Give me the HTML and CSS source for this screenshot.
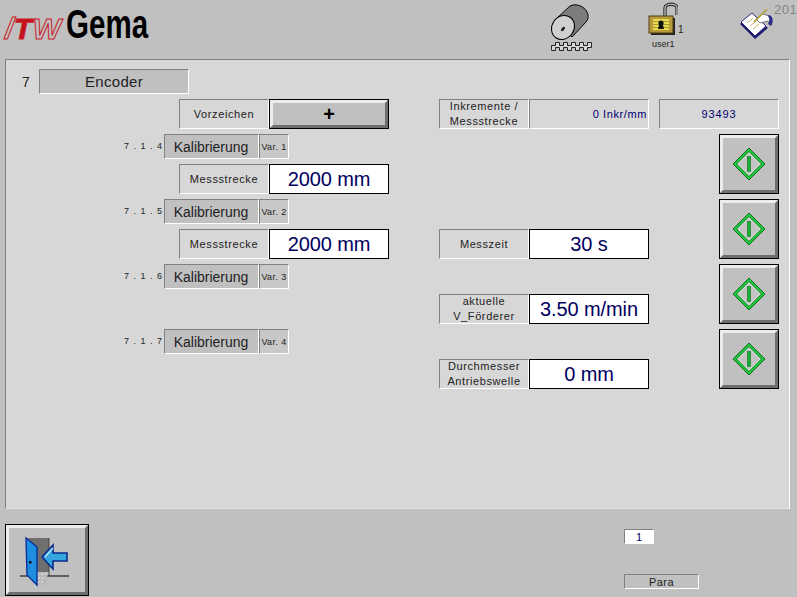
FILE: index.html
```html
<!DOCTYPE html>
<html lang="de">
<head>
<meta charset="utf-8">
<title>Encoder</title>
<link rel="stylesheet" href="styles.css">
</head>
<body>
<svg class="defs" width="0" height="0" aria-hidden="true">
  <symbol id="diamond" viewBox="0 0 34 34">
    <path d="M17 1 33 17 17 33 1 17Z" fill="#20c83c" stroke="#0c6e1e" stroke-width="1"/>
    <path d="M17 4.500 29.500 17 17 29.500 4.500 17Z" fill="#d6ded6" stroke="#0c7a22" stroke-width="1"/>
    <path d="M17 6.500 27.500 17 17 27.500 6.500 17Z" fill="#c4c4c4"/>
    <rect x="15.500" y="9.500" width="3" height="15" fill="#18b034" stroke="#0c6e1e" stroke-width=".6"/>
  </symbol>
</svg>
<header class="top">
  <div class="logo"><span class="itw">/<b>T</b>W</span><span class="gema">Gema</span></div>
  <svg class="ico-encoder" width="42" height="48" viewBox="0 0 42 48">
    <path d="M5 17 20 3C26 0 34 3 37 9 39 13 38 17 36 19L22 34Z" fill="#7d7d7d" stroke="#000"/>
    <ellipse cx="13" cy="24.500" rx="11" ry="12.500" transform="rotate(35 13 24.500)" fill="#d0d0d0" stroke="#000"/>
    <ellipse cx="13" cy="26" rx="2.600" ry="1.400" transform="rotate(-50 13 26)" fill="#222"/>
    <path d="M1.500 46.500V42.500H5.500V39.500H9.500V42.500H13.500V39.500H17.500V42.500H21.500V39.500H25.500V42.500H29.500V39.500H33.500V42.500H37.500V39.500H41.500V44.500H37.500V47.500H33.500V44.500H29.500V47.500H25.500V44.500H21.500V47.500H17.500V44.500H13.500V47.500H9.500V44.500H5.500V47.500H1.500Z" fill="#d8d8d8" stroke="#222"/>
  </svg>
  <div class="user">
    <div class="lockrow">
      <svg width="30" height="33" viewBox="0 0 30 33">
        <path d="M17 14V6C17 1 29 1 29 6V13" fill="none" stroke="#333" stroke-width="3.400"/>
        <path d="M17 14V6C17 1 29 1 29 6V13" fill="none" stroke="#c8c8c8" stroke-width="1.200"/>
        <rect x="3" y="16" width="24" height="17" fill="#222"/>
        <rect x="1" y="14" width="24" height="17" fill="#b89a3c" stroke="#4c3d10"/>
        <rect x="5" y="17" width="16" height="11" fill="#e8dc50"/>
        <path d="M5 19.500H21M5 22.500H21M5 25.500H21" stroke="#a89a30"/>
        <circle cx="13" cy="21" r="2.600" fill="#111"/>
        <path d="M11.500 21H14.500L16 27H10Z" fill="#111"/>
      </svg>
      <span class="lockno">1</span>
    </div>
    <span class="username">user1</span>
  </div>
  <svg class="ico-note" width="36" height="32" viewBox="0 0 36 32">
    <path d="M1 15 14 5 29 19 16 30Z" fill="#1d1d6e"/>
    <path d="M2 13 13 4 27 17 16 27Z" fill="#fff" stroke="#26267e"/>
    <path d="M8 14 14 9M11 17 17 12M14 20 20 15" stroke="#c9b765"/>
    <path d="M17 10 21 14 29 12 32 16 30 7 24 5Z" fill="#fff" stroke="#444" stroke-width=".7"/>
    <path d="M30 6C34 7 35 13 32 17L29 15C31 12 31 9 29 7Z" fill="#2a2a8a"/>
    <path d="M15 13 28 0" stroke="#b7a24a" stroke-width="1.800"/>
  </svg>
  <span class="counter">201</span>
</header>

<main class="panel">
  <div class="title-row">
    <span class="title-no">7</span>
    <div class="title">Encoder</div>
  </div>
  <div class="form">
    <div class="label r1 c-left">Vorzeichen</div>
    <div class="toggle r1 c-leftval"><span class="bevel">+</span></div>
    <div class="label two r1 c-mid">Inkremente /<br>Messstrecke</div>
    <div class="readout end r1 c-midval">0 Inkr/mm</div>
    <div class="readout r1 c-far">93493</div>

    <span class="num r2">7 . 1 . 4</span>
    <div class="kal r2">Kalibrierung</div>
    <div class="var r2">Var. 1</div>
    <div class="label r3 c-left">Messstrecke</div>
    <div class="value r3 c-leftval">2000 mm</div>
    <button class="go r2-3" type="button"><span class="bevel"><svg width="34" height="34"><use href="#diamond"/></svg></span></button>

    <span class="num r4">7 . 1 . 5</span>
    <div class="kal r4">Kalibrierung</div>
    <div class="var r4">Var. 2</div>
    <div class="label r5 c-left">Messstrecke</div>
    <div class="value r5 c-leftval">2000 mm</div>
    <div class="label r5 c-mid">Messzeit</div>
    <div class="value r5 c-midval">30 s</div>
    <button class="go r4-5" type="button"><span class="bevel"><svg width="34" height="34"><use href="#diamond"/></svg></span></button>

    <span class="num r6">7 . 1 . 6</span>
    <div class="kal r6">Kalibrierung</div>
    <div class="var r6">Var. 3</div>
    <div class="label two r7 c-mid">aktuelle<br>V_Förderer</div>
    <div class="value r7 c-midval">3.50 m/min</div>
    <button class="go r6-7" type="button"><span class="bevel"><svg width="34" height="34"><use href="#diamond"/></svg></span></button>

    <span class="num r8">7 . 1 . 7</span>
    <div class="kal r8">Kalibrierung</div>
    <div class="var r8">Var. 4</div>
    <div class="label two r9 c-mid">Durchmesser<br>Antriebswelle</div>
    <div class="value r9 c-midval">0 mm</div>
    <button class="go r8-9" type="button"><span class="bevel"><svg width="34" height="34"><use href="#diamond"/></svg></span></button>
  </div>
</main>

<footer class="bottom">
  <button class="exit" type="button"><span class="bevel">
    <svg width="60" height="60" viewBox="0 0 60 60">
      <rect x="11" y="3" width="22" height="34" fill="#6f6f6f"/>
      <path d="M33 3V41" stroke="#444"/>
      <path d="M4 41H53" stroke="#000" stroke-width="1.200"/>
      <path d="M21 37H32L30 50H21Z" fill="#b9b9b9"/>
      <path d="M21 39H32M22 43H30M21 47H29" stroke="#eee" stroke-dasharray="2 2"/>
      <path d="M10 3 21 12V50L11 40Z" fill="#1e8fe0" stroke="#0a2f9c" stroke-width="1.400"/>
      <rect x="13" y="26" width="2.500" height="2.500" fill="#111"/>
      <path d="M26 22 37 10V18H51V26H37V34Z" fill="#35a6dd" stroke="#0a2a90" stroke-width="1.600"/>
      <path d="M29 22 37 13" stroke="#bfe8fa" stroke-width="1.200"/>
    </svg>
  </span></button>
  <div class="status">
    <div class="page">1</div>
    <div class="mode">Para</div>
  </div>
</footer>
</body>
</html>
```

FILE: styles.css
```css
* { box-sizing: border-box; }

html, body {
  margin: 0;
  width: 797px;
  height: 597px;
  overflow: hidden;
}

body {
  background: #c0c0c0;
  font-family: "Liberation Sans", Arial, sans-serif;
  color: #222;
  position: relative;
}

.defs { position: absolute; }

/* Header */
.top {
  height: 59px;
  display: flex;
  align-items: flex-start;
  padding-left: 5px;
}

.logo {
  width: 142px;
  height: 59px;
  display: flex;
  align-items: flex-start;
  white-space: nowrap;
}

.itw {
  width: 60px;
  margin-top: 13px;
  font-size: 30px;
  line-height: 32px;
  font-style: italic;
  font-weight: bold;
  color: transparent;
  -webkit-text-stroke: 1px #c8202a;
  letter-spacing: .5px;
}

.itw b {
  color: #c4101c;
}

.gema {
  margin: 1px 0 0 0;
  font-size: 41px;
  line-height: 46px;
  font-weight: bold;
  color: #000;
  transform: translateX(4px) scaleX(.72);
  transform-origin: left top;
}

.ico-encoder { margin: 3px 0 0 403px; flex: none; }

.user {
  margin: 2px 0 0 56px;
  width: 34px;
  flex: none;
  display: flex;
  flex-direction: column;
  align-items: flex-start;
}

.lockrow { display: flex; align-items: flex-end; height: 33px; }
.lockno { font-size: 10px; line-height: 10px; }
.username { margin: 4px 0 0 4px; font-size: 9px; line-height: 10px; }

.ico-note { margin: 9px 0 0 57px; flex: none; }

.counter {
  position: absolute;
  left: 774px;
  top: 2px;
  font-size: 13px;
  line-height: 15px;
  color: #868686;
  letter-spacing: .5px;
}

/* Panel */
.panel {
  margin-left: 5px;
  width: 785px;
  height: 450px;
  background: #d7d7d7;
  border: 1px solid;
  border-color: #808080 #fff #e4e4e4 #808080;
  padding-top: 9px;
}

.title-row {
  display: flex;
  align-items: center;
  height: 25px;
}

.title-no {
  width: 33px;
  padding-left: 16px;
  font-size: 14px;
}

.title {
  width: 150px;
  height: 25px;
  background: #c0c0c0;
  border: 1px solid;
  border-color: #808080 #fff #fff #808080;
  font-size: 15px;
  letter-spacing: .3px;
  line-height: 24px;
  text-align: center;
}

/* Form grid */
.form {
  display: grid;
  margin: 5px 0 0 114px;
  grid-template-columns: 44px 15px 80px 10px 20px 100px 50px 90px 120px 10px 60px 60px;
  grid-template-rows: 30px 25px 30px 25px 30px 25px 30px 25px 30px;
  row-gap: 5px;
}

.r1 { grid-row: 1; }
.r2 { grid-row: 2; }
.r3 { grid-row: 3; }
.r4 { grid-row: 4; }
.r5 { grid-row: 5; }
.r6 { grid-row: 6; }
.r7 { grid-row: 7; }
.r8 { grid-row: 8; }
.r9 { grid-row: 9; }
.r2-3 { grid-row: 2 / 4; }
.r4-5 { grid-row: 4 / 6; }
.r6-7 { grid-row: 6 / 8; }
.r8-9 { grid-row: 8 / 10; }

.c-left { grid-column: 3 / 5; }
.c-leftval { grid-column: 5 / 7; }
.c-mid { grid-column: 8; }
.c-midval { grid-column: 9; }
.c-far { grid-column: 11 / 13; }

.label, .readout, .kal, .var, .value, .toggle, .go {
  display: flex;
  align-items: center;
  justify-content: center;
}

.label, .readout, .kal, .var, .mode, .page {
  border: 1px solid;
  border-color: #808080 #fff #fff #808080;
}

.label {
  font-size: 11px;
  letter-spacing: .6px;
  text-align: center;
}

.label.two { line-height: 15px; }

.readout {
  font-size: 11px;
  letter-spacing: .9px;
  color: #000070;
}

.readout.end {
  justify-content: flex-end;
  padding-right: 1px;
  letter-spacing: .6px;
}

.num {
  grid-column: 1;
  font-size: 9px;
  line-height: 25px;
  letter-spacing: 1px;
  white-space: nowrap;
  text-align: right;
  padding-right: 1px;
}

.kal {
  grid-column: 2 / 4;
  background: #c0c0c0;
  font-size: 14px;
  padding-right: 1px;
}

.var {
  grid-column: 4 / 6;
  background: #c8c8c8;
  font-size: 9px;
  letter-spacing: .4px;
  white-space: nowrap;
}

.value {
  background: #fff;
  border: 1px solid #000;
  color: #000060;
  font-size: 20px;
  letter-spacing: -.1px;
  padding-top: 1px;
  white-space: nowrap;
}

.toggle, .go, .exit {
  padding: 0;
  border: 1px solid #000;
  background: #c0c0c0;
}

.bevel {
  flex: 1;
  align-self: stretch;
  display: flex;
  align-items: center;
  justify-content: center;
  background: #c0c0c0;
  border: 3px solid;
  border-color: #ececec #6e6e6e #6e6e6e #ececec;
}

.toggle .bevel {
  font-size: 20px;
  font-weight: bold;
  color: #000;
}

.go { grid-column: 12; display: flex; }
.go svg { display: block; }

/* Footer */
.bottom {
  display: flex;
  padding: 15px 0 0 5px;
}

.exit {
  width: 84px;
  height: 72px;
  display: flex;
}

.exit .bevel { padding: 7px 0 0 7px; justify-content: flex-start; align-items: flex-start; }
.exit svg { display: block; }

.status {
  margin: 5px 0 0 535px;
  display: flex;
  flex-direction: column;
  align-items: flex-start;
  gap: 30px;
}

.page {
  width: 30px;
  height: 15px;
  background: #fff;
  color: #000060;
  font-size: 11px;
  line-height: 14px;
  text-align: center;
}

.mode {
  width: 75px;
  height: 15px;
  background: #c0c0c0;
  font-size: 11px;
  letter-spacing: .5px;
  line-height: 14px;
  text-align: center;
}
```
